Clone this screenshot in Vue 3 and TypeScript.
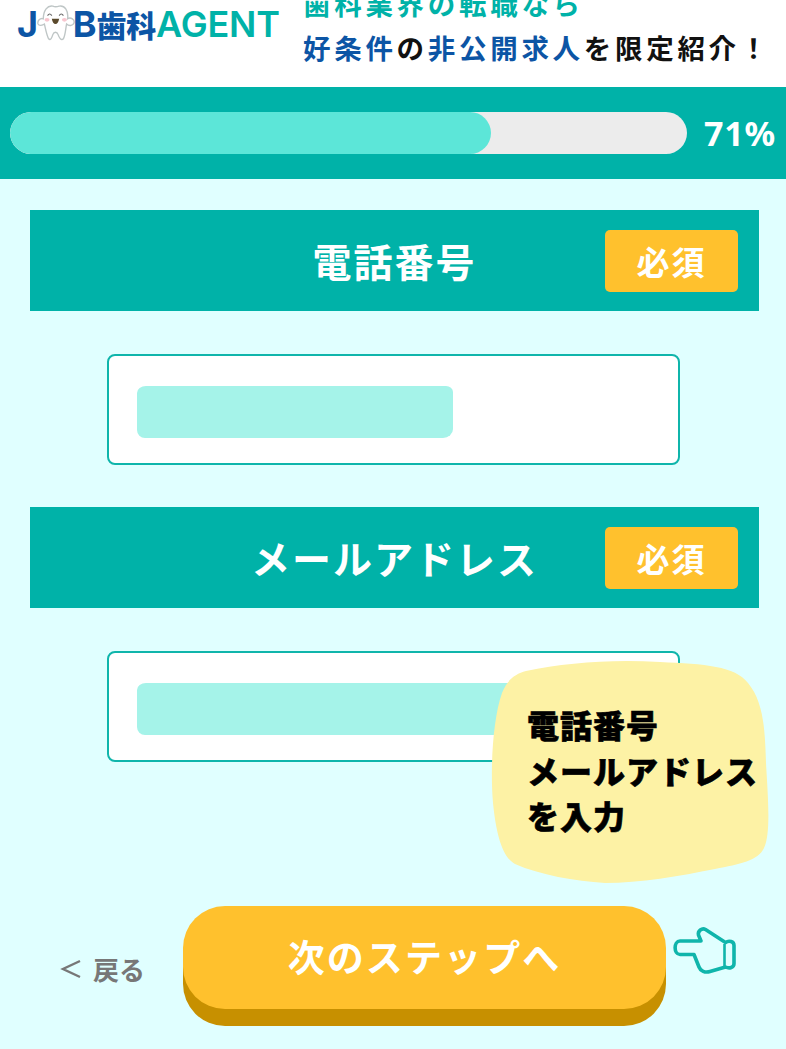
<script setup lang="ts">
const fields = [
  { label: '電話番号', width: 316 },
  { label: 'メールアドレス', width: 400 },
]
const progress = 71
</script>

<template>
  <div class="page">
    <header class="top">
      <div class="logo">
        <span class="blue">J</span>
        <svg class="tooth" viewBox="0 0 36 36" aria-hidden="true">
          <path d="M6 14C3 13 0 16 1 19C2 21 5 20 7 19C8 23 9 29 11 33C13 35 14 32 15 29C16 26 19 26 20 29C21 32 23 35 25 33C27 29 27 24 28 19C30 21 34 21 35 18C36 15 32 12 29 14C30 6 26 1 21 2C18 3 17 3 15 2C10 1 6 6 6 14Z" fill="#fff" stroke="#bfc6c6" stroke-width="1.3"/>
          <path d="M10 11Q12 8 14 11M21 11Q23 8 25 11" fill="none" stroke="#666" stroke-width="1.1"/>
          <ellipse cx="9.500" cy="15" rx="2.400" ry="1.700" fill="#f8c6cf"/>
          <ellipse cx="26" cy="15" rx="2.400" ry="1.700" fill="#f8c6cf"/>
          <path d="M14 14H21Q20 19 17.500 19Q15 19 14 14Z" fill="#5b4a2c"/>
        </svg>
        <span class="blue">B</span><span class="blue kanji">歯科</span><span class="teal">AGENT</span>
      </div>
      <div class="copy">
        <p class="teal-line">歯科業界の転職なら</p>
        <p><span class="blue">好条件</span>の<span class="blue">非公開求人</span>を限定紹介！</p>
      </div>
    </header>

    <section class="progress">
      <div class="track">
        <div class="fill" :style="{ width: progress + '%' }"></div>
      </div>
      <span class="percent">{{ progress }}%</span>
    </section>

    <main class="form">
      <div v-for="field in fields" :key="field.label" class="field">
        <div class="title">
          <span class="title-text">{{ field.label }}</span>
          <span class="required">必須</span>
        </div>
        <div class="input">
          <div class="mask" :style="{ width: field.width + 'px' }"></div>
        </div>
      </div>
    </main>

    <footer class="actions">
      <a class="back"><svg class="chevron" viewBox="0 0 22 20" aria-hidden="true"><path d="M20 2L3 10L20 18" fill="none" stroke="#777" stroke-width="2.400"/></svg>戻る</a>
      <button class="next" type="button">次のステップへ</button>
      <svg class="hand" viewBox="0 0 64 46" aria-hidden="true">
        <path d="M7 15H28L25.500 9C24.500 5 29 1.500 32.500 3.500L52.500 16.500C56 14 61 15.500 61 19.500V37.500C61 41.500 56.500 43 52.500 41L37 45.500C32 47 27.500 45 26 41L21 28.500H7C0.500 28.500 0.500 15 7 15Z" fill="none" stroke="#0fb5ab" stroke-width="3.600" stroke-linejoin="round" transform="translate(0 -1)"/>
        <path d="M51.500 17V39" fill="none" stroke="#0fb5ab" stroke-width="2.600"/>
      </svg>
    </footer>

    <aside class="note">
      <svg class="note-shape" viewBox="0 0 280 226" aria-hidden="true">
        <path d="M36 13C75 5 120 1 170 4C215 6 245 8 258 25C272 42 275 65 276 105C278 140 281 175 274 190C268 203 250 206 225 211C190 218 150 225 115 225C85 223 50 217 25 206C12 199 6 175 3 145C0 110 3 60 12 35C17 22 25 16 36 13Z" fill="#fdf2a5"/>
      </svg>
      <p class="note-text">電話番号<br>メールアドレス<br>を入力</p>
    </aside>
  </div>
</template>

<style scoped>
* {
  box-sizing: border-box;
}
.page {
  position: relative;
  width: 786px;
  height: 1049px;
  overflow: hidden;
  background: #e0ffff;
  font-family: "Noto Sans CJK JP", "Noto Sans", sans-serif;
}
.top {
  height: 87px;
  display: flex;
  align-items: flex-end;
  background: #fff;
  overflow: hidden;
}
.logo {
  width: 303px;
  height: 87px;
  padding: 5px 0 0 17px;
  display: flex;
  align-items: flex-start;
  font-family: Inter, "Noto Sans CJK JP", sans-serif;
  font-size: 36px;
  font-weight: 600;
  line-height: 38px;
  letter-spacing: -0.200px;
  color: #00b2a8;
}
.logo .blue {
  font-weight: 700;
}
.tooth {
  width: 38px;
  height: 38px;
  margin: -1px -2px 0 -1px;
  flex: none;
}
.logo .kanji {
  font-family: "Noto Sans CJK JP", sans-serif;
  font-size: 30px;
  font-weight: 900;
}
.blue {
  color: #0c55a5;
}
.copy {
  padding-bottom: 18px;
  font-size: 27.500px;
  font-weight: 700;
  line-height: 44px;
  letter-spacing: 3.700px;
  color: #111;
  white-space: nowrap;
}
.copy p {
  margin: 0;
}
.teal-line {
  color: #00b2a8;
}
.progress {
  height: 92px;
  padding: 25px 10px;
  display: flex;
  align-items: center;
  background: #00b2a8;
}
.track {
  width: 677px;
  height: 42px;
  flex: none;
  border-radius: 21px;
  background: #ececec;
  overflow: hidden;
}
.fill {
  height: 100%;
  border-radius: 21px;
  background: #5ce6d8;
}
.percent {
  margin-left: 17px;
  font-family: "Noto Sans", sans-serif;
  font-size: 34px;
  font-weight: 700;
  letter-spacing: 0.800px;
  color: #fff;
}
.form {
  padding: 31px 27px 0 30px;
  display: flex;
  flex-direction: column;
  gap: 42px;
}
.field {
  display: flex;
  flex-direction: column;
  align-items: center;
  gap: 43px;
}
.title {
  position: relative;
  width: 100%;
  height: 101px;
  display: flex;
  align-items: center;
  justify-content: center;
  background: #00b2a8;
  color: #fff;
}
.title-text {
  margin-top: -1px;
  font-size: 39px;
  font-weight: 700;
  letter-spacing: 2px;
}
.required {
  position: absolute;
  top: 20px;
  right: 21px;
  width: 133px;
  height: 62px;
  display: flex;
  align-items: center;
  justify-content: center;
  border-radius: 5px;
  background: #ffc12d;
  font-size: 33px;
  font-weight: 700;
  letter-spacing: 2px;
}
.input {
  width: 573px;
  height: 111px;
  margin-right: 2px;
  padding: 30px 28px;
  border: 2px solid #0fb5ab;
  border-radius: 8px;
  background: #fff;
}
.mask {
  height: 52px;
  border-radius: 9px 7px 10px 8px / 7px 6px 9px 8px;
  background: #a5f3e9;
}
.actions {
  position: absolute;
  left: 0;
  right: 0;
  top: 906px;
  padding-left: 60px;
  display: flex;
  align-items: flex-start;
}
.back {
  width: 123px;
  margin-top: 43px;
  display: flex;
  align-items: center;
  gap: 11px;
  font-size: 26px;
  font-weight: 700;
  line-height: 40px;
  color: #777;
  white-space: nowrap;
}
.chevron {
  width: 22px;
  height: 20px;
  flex: none;
}
.next {
  width: 483px;
  height: 103px;
  padding: 0 0 4px;
  border: 0;
  border-radius: 42px;
  background: #ffc12d;
  box-shadow: 0 17px 0 #c79000;
  color: #fff;
  font-family: inherit;
  font-size: 37px;
  font-weight: 700;
  letter-spacing: 2.100px;
}
.hand {
  width: 64px;
  height: 46px;
  margin: 21px 0 0 7px;
  overflow: visible;
}
.note {
  position: absolute;
  left: 490px;
  top: 658px;
  width: 280px;
  height: 226px;
}
.note-shape {
  position: absolute;
  inset: 0;
  width: 100%;
  height: 100%;
}
.note-text {
  position: relative;
  margin: 0;
  padding: 44px 0 0 37px;
  font-size: 32px;
  font-weight: 900;
  line-height: 45.500px;
  letter-spacing: 1px;
  color: #000;
  white-space: nowrap;
  -webkit-text-stroke: 0.6px #000;
}
</style>
